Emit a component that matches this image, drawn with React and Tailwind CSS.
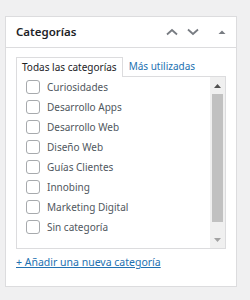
const categories = [
  'Curiosidades',
  'Desarrollo Apps',
  'Desarrollo Web',
  'Diseño Web',
  'Guías Clientes',
  'Innobing',
  'Marketing Digital',
  'Sin categoría',
];

const ChevronUp = () => (
  <svg width="14" height="14" viewBox="0 0 14 14" fill="none" stroke="currentColor" strokeWidth="1.8">
    <path d="M2 9.5 L7 5 L12 9.5" />
  </svg>
);

const ChevronDown = () => (
  <svg width="14" height="14" viewBox="0 0 14 14" fill="none" stroke="currentColor" strokeWidth="1.8">
    <path d="M2 4.5 L7 9 L12 4.5" />
  </svg>
);

const Triangle = () => (
  <svg width="8" height="6" viewBox="0 0 8 6" fill="currentColor">
    <path d="M0.5 5 L4 1.5 L7.5 5 Z" />
  </svg>
);

export default function App() {
  return (
    <div className="w-[250px] h-[300px] bg-[#f0f0f1] pt-[16px] pl-[5px] font-['Noto_Sans',sans-serif]">
      <div className="w-[232px] h-[271px] bg-white border border-[#dcdcde] flex flex-col">
        {/* Header */}
        <div className="h-[31px] flex items-center border-b border-[#dcdcde] pl-[10px] pr-[10px]">
          <h2 className="text-[11.5px] font-semibold text-[#1d2327] flex-1">Categorías</h2>
          <div className="flex items-center text-[#787c82] gap-[7px]">
            <ChevronUp />
            <ChevronDown />
            <span className="ml-[11px] flex"><Triangle /></span>
          </div>
        </div>

        {/* Body */}
        <div className="px-[10px] pt-[8px]">
          <div className="flex items-end text-[10px] h-[20px]">
            <div className="h-[20px] px-[5px] border border-b-0 border-[#dcdcde] bg-white text-[#1d2327] flex items-center relative top-[1px]">
              Todas las categorías
            </div>
            <a className="ml-[6px] text-[#2271b1] h-[20px] flex items-center">Más utilizadas</a>
          </div>

          <div className="h-[173px] border border-[#dcdcde] flex">
            <ul className="flex-1 pl-[9px]">
              {categories.map((c) => (
                <li key={c} className="h-[20px] flex items-center gap-[7px] text-[10px] text-[#50575e]">
                  <span className="w-[14px] h-[14px] border border-[#a7aaad] rounded-[3px] bg-white" />
                  {c}
                </li>
              ))}
            </ul>
            <div className="w-[15px] bg-[#f0f0f0] flex flex-col items-center">
              <div className="h-[17px] flex items-center justify-center text-[#505050]">
                <svg width="7" height="4" viewBox="0 0 7 4" fill="currentColor"><path d="M0 4 L3.5 0 L7 4 Z" /></svg>
              </div>
              <div className="w-[11px] h-[128px] bg-[#c1c1c1]" />
              <div className="flex-1" />
              <div className="h-[17px] flex items-center justify-center text-[#a3a3a3]">
                <svg width="7" height="4" viewBox="0 0 7 4" fill="currentColor"><path d="M0 0 L3.5 4 L7 0 Z" /></svg>
              </div>
            </div>
          </div>

          <a className="block mt-[6px] text-[10.5px] text-[#2271b1] underline">+ Añadir una nueva categoría</a>
        </div>
      </div>
    </div>
  );
}
